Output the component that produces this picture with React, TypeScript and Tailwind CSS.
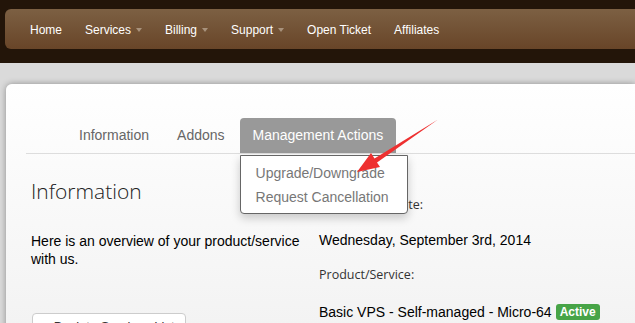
import React from 'react';

const navItems = [
  { label: 'Home', caret: false },
  { label: 'Services', caret: true },
  { label: 'Billing', caret: true },
  { label: 'Support', caret: true },
  { label: 'Open Ticket', caret: false },
  { label: 'Affiliates', caret: false },
];

export default function App() {
  return (
    <div className="relative w-[635px] h-[323px] overflow-hidden bg-[#dadada] font-['Liberation_Sans',Arial,sans-serif]">
      {/* top bar */}
      <div className="h-[63px] bg-[#231509] pt-[9px] pl-[5px]">
        <nav className="h-[40px] rounded-l-[6px] bg-gradient-to-b from-[#7c6043] to-[#684528] flex items-center pl-[25px] gap-[23px] text-white text-[12px] pt-px">
          {navItems.map((item) => (
            <span key={item.label} className="flex items-center">
              {item.label}
              {item.caret && (
                <span className="ml-[5px] w-0 h-0 border-l-[3px] border-r-[3px] border-t-[4px] border-l-transparent border-r-transparent border-t-[#a8927c]" />
              )}
            </span>
          ))}
        </nav>
      </div>

      {/* card */}
      <div className="pt-[21px] pl-[6px]">
        <div className="h-[300px] rounded-tl-[6px] bg-gradient-to-b from-white to-[#f0f0f0] shadow-[0_0_6px_rgba(0,0,0,0.35)] pl-[20px] pt-[34px]">
          {/* tabs */}
          <div className="flex h-[36px] border-b border-[#dddddd] pl-[40px] gap-[2px] text-[14px] text-[#666]">
            <div className="px-[13px] flex items-center">Information</div>
            <div className="px-[13px] flex items-center">Addons</div>
            <div className="relative">
              <div className="h-[35px] px-[13px] flex items-center bg-[#999] text-white rounded-t-[4px]">
                Management Actions
              </div>
              <div className="absolute z-10 left-0 top-[37px] w-[168px] bg-white border border-[#666] rounded-b-[4px] shadow-[0_4px_10px_rgba(0,0,0,0.2)] pt-[5px] pb-[4px] text-[#777]">
                <div className="px-[15px] leading-[24px]">Upgrade/Downgrade</div>
                <div className="px-[15px] leading-[24px]">Request Cancellation</div>
              </div>
            </div>
          </div>

          {/* content */}
          <div className="flex">
            <div className="w-[293px] pl-[5px] pr-[10px]">
              <h2 className="mt-[25px] font-['Open_Sans',sans-serif] font-light text-[21px] leading-[25px] text-[#222]">
                Information
              </h2>
              <p className="mt-[28px] text-[14px] leading-[18px] text-black">
                Here is an overview of your product/service with us.
              </p>
              <button className="mt-[45px] ml-px h-[30px] px-[10px] pt-[3px] flex items-start bg-white border border-[#ccc] rounded-[4px] text-[13px] text-[#333]">
                « Back to Services List
              </button>
            </div>
            <div>
              <div className="mt-[42px] font-['Open_Sans',sans-serif] text-[12.5px] leading-[18px] text-[#333]">
                Registration Date:
              </div>
              <div className="mt-[17px] text-[14px] leading-[18px] text-black">
                Wednesday, September 3rd, 2014
              </div>
              <div className="mt-[17px] font-['Open_Sans',sans-serif] text-[12.5px] leading-[18px] text-[#333]">
                Product/Service:
              </div>
              <div className="mt-[19px] flex items-center text-[14px] leading-[18px] text-black">
                Basic VPS - Self-managed - Micro-64
                <span className="ml-[4px] px-[4px] h-[16px] flex items-center rounded-[3px] bg-[#47a447] text-white text-[12px] font-bold">
                  Active
                </span>
              </div>
            </div>
          </div>
        </div>
      </div>

      {/* annotation arrow */}
      <svg className="absolute left-0 top-0 z-20 pointer-events-none" width="635" height="323">
        <polygon
          points="438,119.5 377,162.5 380,167 357,172 371,153 374.5,158.5"
          fill="#ee3030"
        />
      </svg>
    </div>
  );
}
